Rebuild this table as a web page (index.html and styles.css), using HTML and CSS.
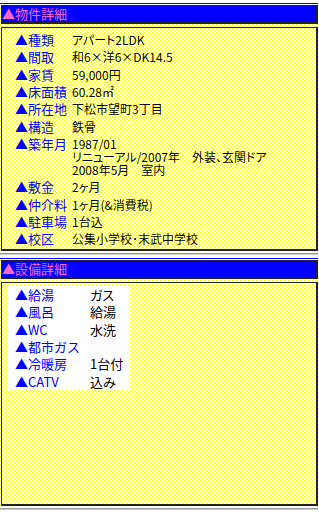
FILE: index.html
```html
<!DOCTYPE html>
<html lang="ja">
<head>
    <meta charset="UTF-8">
    <meta name="viewport" content="width=device-width, initial-scale=1.0">
    <title>物件詳細</title>
    <link rel="stylesheet" href="styles.css">
</head>
<body>
    <div class="box">
        <div class="bar"></div>
        <div class="frame dots">
            <h2 class="head">▲物件詳細</h2>
            <div class="panel dots">
                <table class="spec">
                    <tr><th>▲種類</th><td>アパート2LDK</td></tr>
                    <tr><th>▲間取</th><td>和6×洋6×DK14.5</td></tr>
                    <tr><th>▲家賃</th><td>59,000円</td></tr>
                    <tr><th>▲床面積</th><td>60.28㎡</td></tr>
                    <tr><th>▲所在地</th><td>下松市望町3丁目</td></tr>
                    <tr><th>▲構造</th><td>鉄骨</td></tr>
                    <tr><th>▲築年月</th><td>1987/01<br>リニューアル/2007年　外装、玄関ドア<br>2008年5月　室内</td></tr>
                    <tr><th>▲敷金</th><td>2ヶ月</td></tr>
                    <tr><th>▲仲介料</th><td>1ヶ月(&amp;消費税)</td></tr>
                    <tr><th>▲駐車場</th><td>1台込</td></tr>
                    <tr><th>▲校区</th><td>公集小学校･末武中学校</td></tr>
                </table>
            </div>
        </div>
    </div>
    <hr class="sep">
    <div class="box">
        <div class="bar"></div>
        <div class="frame dots">
            <h2 class="head">▲設備詳細</h2>
            <div class="panel dots">
                <table class="equip">
                    <tr><th>▲給湯</th><td>ガス</td></tr>
                    <tr><th>▲風呂</th><td>給湯</td></tr>
                    <tr><th>▲WC</th><td>水洗</td></tr>
                    <tr><th>▲都市ガス</th><td></td></tr>
                    <tr><th>▲冷暖房</th><td>1台付</td></tr>
                    <tr><th>▲CATV</th><td>込み</td></tr>
                </table>
            </div>
        </div>
    </div>
    <hr class="sep">
</body>
</html>
```

FILE: styles.css
```css
body {
    margin: 0;
    padding: 3px 0 0 0;
    background: #fff;
    font-family: "Noto Sans CJK JP", "Liberation Sans", sans-serif;
    color: #000;
}

/* yellow dot screen, 1px dots on a 4px staggered grid, same phase page-wide */
.dots {
    background-color: #fff;
    background-image: url("data:image/svg+xml,%3Csvg xmlns='http://www.w3.org/2000/svg' width='4' height='4' shape-rendering='crispEdges'%3E%3Crect width='1' height='1' fill='%23ffff00'/%3E%3Crect x='2' y='2' width='1' height='1' fill='%23ffff00'/%3E%3C/svg%3E");
    background-size: 4px 4px;
    background-attachment: fixed;
}

.box {
    width: 318px;
}

.bar {
    height: 1px;
    background: #00f;
}

.frame {
    margin-top: 1px;
    padding-left: 1px;
}

.head {
    margin: 0;
    height: 16px;
    line-height: 16px;
    font-size: 13px;
    font-weight: normal;
    color: #ff66cc;
    background: #00f;
    border: 1px solid #222;
    border-right-width: 2px;
    border-bottom-width: 2px;
}

.panel {
    margin-top: 3px;
    height: 218px;
    padding: 3px 0 0 5px;
    border: 1px solid #222;
    border-right-width: 2px;
    border-bottom-width: 2px;
}

table {
    border-collapse: collapse;
}

th, td {
    padding: 2px 0 2.33px 0;
    line-height: 13px;
    vertical-align: top;
    text-align: left;
}

th {
    font-weight: normal;
    font-size: 13px;
    color: #00f;
    padding-left: 8px;
    white-space: nowrap;
}

td {
    font-feature-settings: "palt";
    white-space: nowrap;
}

.spec th {
    width: 57px;
}

.spec td {
    font-size: 12px;
}

.equip {
    width: 123px;
    background: #fff;
}

.equip th {
    width: 75px;
}

.equip td {
    font-size: 13px;
}

.sep {
    margin: 2px 0 3px 0;
    width: 318px;
    height: 0;
    border: 0;
    border-top: 1px solid #999;
    border-bottom: 1px solid #ccc;
}
```
